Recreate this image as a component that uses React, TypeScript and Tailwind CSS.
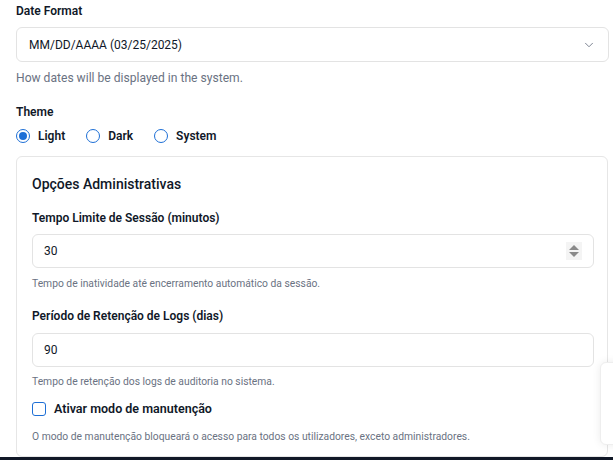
import { ChevronDown } from "lucide-react";

function Radio({ label, checked }: { label: string; checked?: boolean }) {
  return (
    <label className="flex items-center gap-2 text-[12px] font-semibold text-gray-900 leading-4">
      <span
        className={
          checked
            ? "w-[14px] h-[14px] rounded-full border border-[#1d6fd6] flex items-center justify-center"
            : "w-[14px] h-[14px] rounded-full border border-[#1d6fd6]"
        }
      >
        {checked && <span className="w-[8px] h-[8px] rounded-full bg-[#1d6fd6]" />}
      </span>
      {label}
    </label>
  );
}

function Spinner() {
  return (
    <div className="flex flex-col items-center gap-[2px] bg-[#f4f4f4] px-[3px] py-[3px]">
      <span className="w-0 h-0 border-l-[5px] border-r-[5px] border-b-[5px] border-l-transparent border-r-transparent border-b-[#8a8a8a]" />
      <span className="w-0 h-0 border-l-[5px] border-r-[5px] border-t-[5px] border-l-transparent border-r-transparent border-t-[#8a8a8a]" />
    </div>
  );
}

export default function App() {
  return (
    <div
      className="relative h-[460px] w-[613px] overflow-hidden bg-white flex flex-col text-gray-900"
      style={{ fontFamily: '"Segoe UI", Roboto, sans-serif' }}
    >
      <div className="flex-1 px-4 pt-[3px] flex flex-col min-h-0">
        <div className="text-[12px] font-semibold leading-4">Date Format</div>
        <div className="mt-2 h-[35px] w-[593px] rounded-md border border-[#e3e3e3] flex items-center justify-between pl-3 pr-[12px] text-[12px]">
          <span>MM/DD/AAAA (03/25/2025)</span>
          <ChevronDown className="w-[14px] h-[14px] text-gray-500" strokeWidth={1.5} />
        </div>
        <div className="mt-[8px] text-[12.1px] text-gray-500 leading-4">How dates will be displayed in the system.</div>

        <div className="mt-[18px] text-[12px] font-semibold leading-4">Theme</div>
        <div className="mt-[8px] flex items-center gap-[21px]">
          <Radio label="Light" checked />
          <Radio label="Dark" />
          <Radio label="System" />
        </div>

        <div className="mt-[12px] w-[592px] flex-1 rounded-md border border-[#e6e6e6] px-[15px] pt-[17px]">
          <div className="text-[14px] font-medium leading-5">Opções Administrativas</div>

          <div className="mt-[16px] text-[12px] font-semibold leading-4">Tempo Limite de Sessão (minutos)</div>
          <div className="mt-[8px] h-[34px] w-[562px] rounded-md border border-[#e3e3e3] flex items-center justify-between pl-[11px] pr-[11px] text-[12px]">
            <span>30</span>
            <Spinner />
          </div>
          <div className="mt-[8px] text-[10.3px] text-gray-500 leading-4">
            Tempo de inatividade até encerramento automático da sessão.
          </div>

          <div className="mt-[16px] text-[12px] font-semibold leading-4">Período de Retenção de Logs (dias)</div>
          <div className="mt-[9px] h-[34px] w-[562px] rounded-md border border-[#e3e3e3] flex items-center pl-[11px] text-[12px]">
            90
          </div>
          <div className="mt-[7px] text-[10.3px] text-gray-500 leading-4">
            Tempo de retenção dos logs de auditoria no sistema.
          </div>

          <label className="mt-[11px] flex items-center gap-2 text-[12.5px] font-semibold leading-4">
            <span className="w-[14px] h-[14px] rounded-[3px] border border-[#1d6fd6]" />
            Ativar modo de manutenção
          </label>
          <div className="mt-[12px] text-[10.3px] text-gray-500 leading-4">
            O modo de manutenção bloqueará o acesso para todos os utilizadores, exceto administradores.
          </div>
        </div>
      </div>
      <div className="h-[3px] bg-[#111827]" />

      <div className="absolute left-[600px] top-[362px] w-[40px] h-[83px] rounded-md border border-[#eeeeee] bg-white shadow-[0_0_8px_rgba(0,0,0,0.08)]" />
    </div>
  );
}
